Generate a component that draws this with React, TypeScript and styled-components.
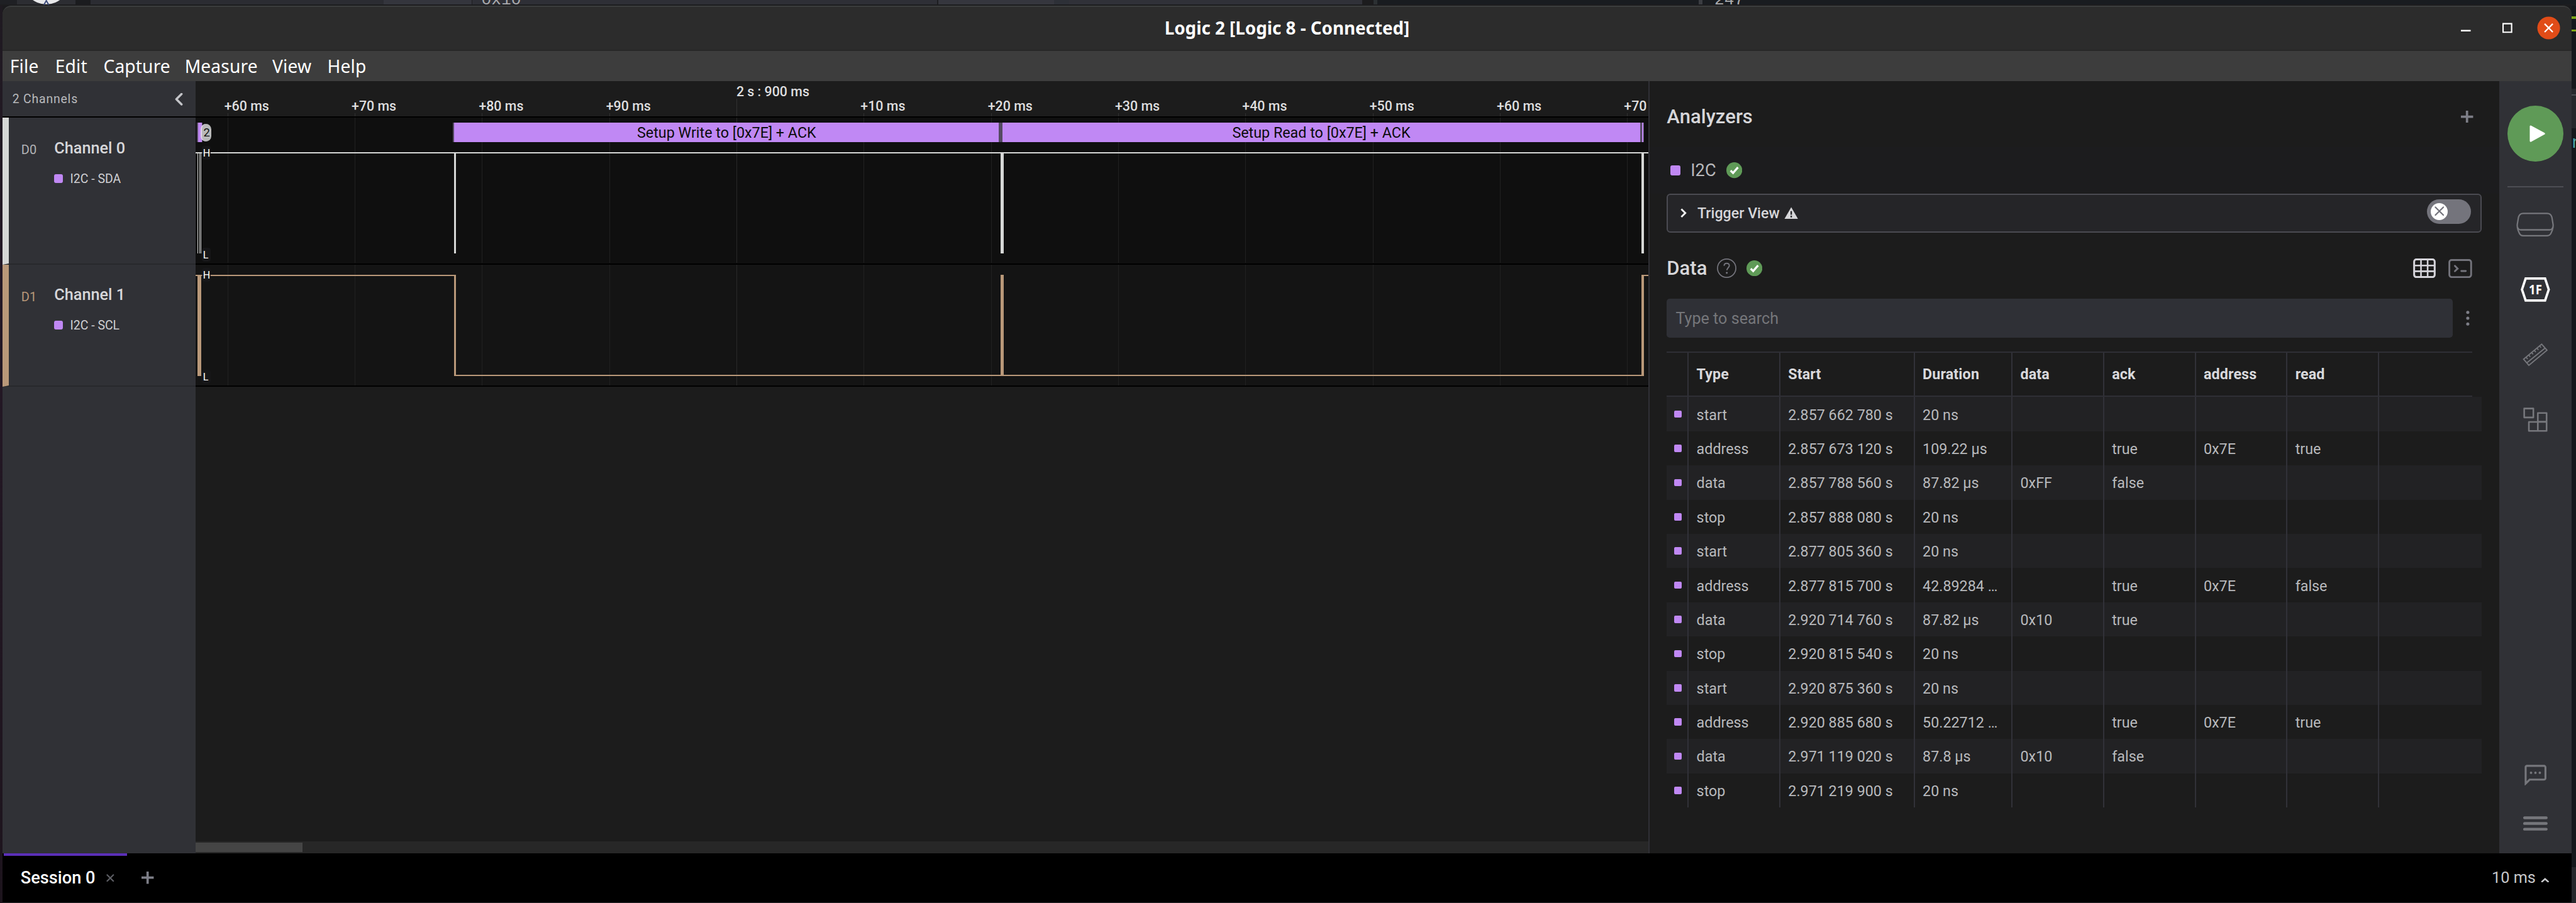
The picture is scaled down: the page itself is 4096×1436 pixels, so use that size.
import React from "react";
import styled, { createGlobalStyle, css } from "styled-components";

/* Design units to device pixels. */
const SCALE = 4096 / 4216;
const p = (n: number) => `${+(n * SCALE).toFixed(3)}px`;

const roboto = `"Roboto", "Liberation Sans", sans-serif`;
const system = `"Noto Sans", "Open Sans", sans-serif`;

const c = {
  panel: "#303136",
  canvas: "#1c1c1c",
  text: "#d6d6d9",
  dim: "#b8b9bc",
  icon: "#76777c",
  line: "#313138",
  purple: "#c088f4",
  green: "#5f9a57",
  brown: "#b99879",
  white: "#d6d7d6",
};

const Global = createGlobalStyle`
  html, body { margin: 0; padding: 0; background: #16181c; }
  body { width: 4096px; height: 1436px; overflow: hidden; }
  * { box-sizing: border-box; }
  svg { display: block; flex: none; }
`;

const Desktop = styled.div`
  width: 4096px;
  height: 1436px;
  display: flex;
  flex-direction: column;
  overflow: hidden;
  font-family: ${roboto};
  color: ${c.text};
  background: #1b1b1d;
`;

/* ---------- what shows of the windows behind ---------- */
const Backdrop = styled.div`
  height: ${p(9)};
  display: flex;
  overflow: hidden;
  flex: none;
`;
const BackdropPart = styled.div<{ w?: number; bg: string }>`
  ${({ w }) => (w ? css`width: ${p(w)}; flex: none;` : css`flex: 1;`)}
  height: 100%;
  background: linear-gradient(${({ bg }) => bg} 7px, #1d1d1f 7px);
  overflow: hidden;
  display: flex;
  align-items: flex-end;
`;
const BackdropText = styled.span<{ pad: number }>`
  font: 400 ${p(27)} / ${p(20)} "Liberation Mono", monospace;
  color: #a9aaad;
  margin-left: ${({ pad }) => p(pad)};
  margin-bottom: ${p(-1.5)};
  white-space: nowrap;
`;
const Middle = styled.div`
  flex: 1;
  display: flex;
  min-height: 0;
`;
const LeftEdge = styled.div`
  width: ${p(4)};
  flex: none;
  background: linear-gradient(#1f1a21, #241826 30%, #1d141d);
`;
const RightEdge = styled.div`
  flex: 1;
  display: flex;
  flex-direction: column;
  overflow: hidden;
  background: #15181c;
`;
const EdgePart = styled.div<{ h: number; bg: string }>`
  height: ${({ h }) => p(h)};
  flex: none;
  background: ${({ bg }) => bg};
`;
const EdgeText = styled.div`
  height: ${p(50)};
  flex: none;
  font: 400 ${p(28)} / ${p(50)} "Liberation Mono", monospace;
  color: #4fa6a6;
`;

/* ---------- window ---------- */
const Window = styled.div`
  width: ${p(4205)};
  flex: none;
  display: flex;
  flex-direction: column;
  border-radius: ${p(14)} ${p(14)} 0 0;
  overflow: hidden;
  background: #2c2c2c;
`;
const TitleBar = styled.div`
  height: ${p(74)};
  flex: none;
  display: grid;
  grid-template-columns: 1fr auto 1fr;
  align-items: center;
  background: #2c2c2c;
  border-radius: ${p(14)} ${p(14)} 0 0;
  border-top: 2px solid #3b3d3d;
  border-bottom: 2px solid #272727;
`;
const Title = styled.div`
  grid-column: 2;
  font: 700 ${p(28.6)} / ${p(40)} ${system};
  color: #fff;
  white-space: nowrap;
`;
const WindowButtons = styled.div`
  grid-column: 3;
  justify-self: end;
  display: flex;
  align-items: center;
  padding-right: ${p(18.5)};
`;
const MenuBar = styled.div`
  height: ${p(50)};
  flex: none;
  display: flex;
  align-items: center;
  padding: 2px 0 0 ${p(12.3)};
  background: #3d3d3d;
`;
const MenuItem = styled.div<{ w: number }>`
  width: ${({ w }) => p(w)};
  font: 400 ${p(29)} / ${p(40)} ${system};
  letter-spacing: ${p(0.15)};
  color: #fff;
  white-space: nowrap;
`;
const Main = styled.div`
  height: ${p(1264)};
  flex: none;
  display: flex;
`;

/* ---------- channels ---------- */
const Channels = styled.div`
  width: ${p(316)};
  flex: none;
  display: flex;
  flex-direction: column;
  background: ${c.panel};
`;
const ChannelsHeader = styled.div`
  height: ${p(60)};
  flex: none;
  display: flex;
  align-items: center;
  justify-content: space-between;
  padding: 1px ${p(20.5)} 0 ${p(16.3)};
  border-bottom: 2px solid #000;
  font-size: ${p(20)};
  letter-spacing: ${p(0.84)};
  color: ${c.dim};
`;
const Channel = styled.div<{ h: number; color: string }>`
  height: ${({ h }) => p(h)};
  flex: none;
  display: flex;
  border-left: 10px solid ${({ color }) => color};
  border-bottom: 2px solid #28292c;
  padding: ${p(30)} 0 0 ${p(20.5)};
`;
const ChannelId = styled.div<{ color: string }>`
  width: ${p(54.1)};
  font: 400 ${p(20.6)} / ${p(30)} ${roboto};
  color: ${({ color }) => color};
  padding-top: ${p(8)};
`;
const ChannelInfo = styled.div`
  display: flex;
  flex-direction: column;
`;
const ChannelName = styled.div`
  font: 500 ${p(26)} / ${p(40)} ${roboto};
`;
const ChannelTag = styled.div`
  display: flex;
  align-items: center;
  gap: ${p(12)};
  margin-top: ${p(13.5)};
  font: 400 ${p(20)} / ${p(32)} ${roboto};
  color: #cfcfd2;
`;
const Swatch = styled.span<{ w: number; h?: number; r?: number }>`
  display: block;
  flex: none;
  width: ${({ w }) => p(w)};
  height: ${({ w, h }) => p(h ?? w)};
  border-radius: ${({ r = 3 }) => p(r)};
  background: ${c.purple};
`;

/* ---------- canvas ---------- */
const Canvas = styled.div`
  width: ${p(2378)};
  flex: none;
  display: flex;
  flex-direction: column;
  overflow: hidden;
  background: ${c.canvas};
`;
const Ruler = styled.div`
  height: ${p(60)};
  flex: none;
  display: flex;
  padding-left: ${p(47.2)};
  overflow: hidden;
  border-bottom: 2px solid #000;
`;
const RulerMark = styled.div<{ major?: boolean }>`
  width: ${p(208.27)};
  flex: none;
  display: flex;
  flex-direction: column;
  padding-top: ${({ major }) => p(major ? 5 : 28.8)};
  font: 500 ${p(22)} / ${p(24)} ${roboto};
  color: #dededf;
  white-space: nowrap;
`;
const RulerLabel = styled.div<{ major?: boolean }>`
  padding-left: ${({ major }) => p(major ? 5 : 0)};
`;
const RulerTick = styled.div`
  flex: 1;
  width: 1px;
  margin: 0 0 0 ${p(5)};
  background: #313131;
`;
const Lane = styled.div<{ h: number; bg: string }>`
  position: relative;
  height: ${({ h }) => p(h)};
  flex: none;
  background: ${({ bg }) => bg};
  border-bottom: 2px solid #000;
`;
const Level = styled.div<{ top: number }>`
  position: absolute;
  left: ${p(10)};
  top: ${({ top }) => p(top)};
  width: ${p(15)};
  height: ${p(23)};
  padding-left: ${p(2.3)};
  border-radius: ${p(4)};
  background: rgba(24, 24, 26, 0.85);
  font: 400 ${p(16.5)} / ${p(24)} ${roboto};
  color: #fff;
`;
const Frames = styled.div`
  position: absolute;
  left: 0;
  top: ${p(8)};
  width: 100%;
  height: ${p(32)};
  display: flex;
`;
const Frame = styled.div<{ gap: number; w: number }>`
  margin-left: ${({ gap }) => p(gap)};
  width: ${({ w }) => p(w)};
  flex: none;
  display: flex;
  align-items: center;
  justify-content: center;
  background: ${c.purple};
  border-left: 2px solid #544a62;
  border-right: 1px solid #544a62;
  padding-top: 2px;
  font: 400 ${p(24)} / ${p(30)} ${roboto};
  color: #0c0c0c;
  white-space: nowrap;
`;
const FrameCount = styled.div`
  position: absolute;
  left: ${p(8.5)};
  top: ${p(2)};
  width: ${p(17.5)};
  height: ${p(29)};
  border-radius: ${p(9)};
  background: #b9b9b9;
  border-left: 2px solid #e2d3ee;
  font: 400 ${p(19)} / ${p(29)} ${roboto};
  text-align: center;
  color: #111;
`;
const CanvasRest = styled.div`
  flex: 1;
`;
const ScrollTrack = styled.div`
  height: ${p(20)};
  flex: none;
  background: #272727;
  padding: 2px 0;
`;
const ScrollThumb = styled.div`
  width: ${p(175)};
  height: 100%;
  background: #454545;
`;
const Divider = styled.div`
  width: ${p(2)};
  flex: none;
  background: #303036;
`;

/* ---------- analyzers ---------- */
const Analyzers = styled.div`
  width: ${p(1390)};
  flex: none;
  display: flex;
  flex-direction: column;
  background: ${c.canvas};
`;
const PanelHeader = styled.div`
  height: ${p(108)};
  flex: none;
  display: flex;
  align-items: center;
  padding: ${p(8)} ${p(42)} 0 ${p(28)};
`;
const Heading = styled.div`
  padding-top: 2px;
  font: 500 ${p(32)} / ${p(40)} ${roboto};
`;
const Spacer = styled.div`
  flex: 1;
`;
const Gap = styled.div<{ w: number }>`
  width: ${({ w }) => p(w)};
  flex: none;
`;
const AnalyzerRow = styled.div`
  height: ${p(76)};
  flex: none;
  display: flex;
  align-items: center;
  padding-left: ${p(34)};
  gap: ${p(17)};
  background: #1c1c1e;
`;
const AnalyzerName = styled.div`
  padding-top: 1px;
  font: 400 ${p(28)} / ${p(40)} ${roboto};
  color: ${c.dim};
`;
const TriggerBox = styled.div`
  margin: 0 ${p(28)};
  height: ${p(64)};
  flex: none;
  display: flex;
  align-items: center;
  border: 2px solid #4b4b52;
  border-radius: ${p(6)};
  background: #252528;
  padding: 0 ${p(16)} 0 ${p(18)};
`;
const TriggerLabel = styled.div`
  margin: 0 ${p(7)} 0 ${p(16)};
  padding-top: 2px;
  font: 500 ${p(23.9)} / ${p(30)} ${roboto};
`;
const Toggle = styled.div`
  width: ${p(72)};
  height: ${p(40)};
  margin-bottom: ${p(6)};
  padding-left: ${p(6)};
  border-radius: ${p(20)};
  background: #74747c;
  display: flex;
  align-items: center;
`;
const Knob = styled.div`
  width: ${p(28)};
  height: ${p(28)};
  border-radius: 50%;
  background: #fff;
  display: flex;
  align-items: center;
  justify-content: center;
`;
const SearchRow = styled.div`
  flex: none;
  height: ${p(64)};
  margin-bottom: ${p(22)};
  padding-left: ${p(28)};
  display: flex;
  align-items: center;
  gap: ${p(22)};
`;
const SearchBox = styled.div`
  width: ${p(1286)};
  height: 100%;
  padding: 1px 0 0 ${p(14.5)};
  border-radius: ${p(5)};
  background: #2f3036;
  font: 400 ${p(25.9)} / ${p(63)} ${roboto};
  color: #75767a;
`;

/* ---------- data table ---------- */
const Table = styled.div`
  margin-left: ${p(28)};
  width: ${p(1334)};
  flex: none;
  display: flex;
  flex-direction: column;
`;
const columns = css`
  display: grid;
  grid-template-columns: ${[36, 150, 220, 160, 150, 150, 150, 150].map(p).join(" ")} 1fr;
`;
const HeadRow = styled.div`
  ${columns}
  width: ${p(1318)};
  height: ${p(75)};
  border-top: 2px solid #2f2f35;
  border-bottom: 2px solid #2f2f35;
`;
const BodyRow = styled.div<{ odd: boolean }>`
  ${columns}
  height: ${p(56)};
  background: ${({ odd }) => (odd ? "#222224" : c.canvas)};
`;
const Cell = styled.div<{ head?: boolean }>`
  display: flex;
  align-items: center;
  padding: ${({ head }) => (head ? "2px" : "3px")} 0 0 ${p(12.7)};
  border-right: 2px solid ${c.line};
  font: ${({ head }) => (head ? 700 : 400)} ${p(24)} / ${p(30)} ${roboto};
  letter-spacing: ${({ head }) => p(head ? 0.12 : 0)};
  color: ${({ head }) => (head ? "#d8d8db" : c.dim)};
  white-space: nowrap;
  &:first-child {
    padding: 0 0 0 ${p(12)};
  }
  &:last-child {
    border-right: 0;
  }
`;

/* ---------- tool rail ---------- */
const Rail = styled.div`
  flex: 1;
  display: flex;
  flex-direction: column;
  align-items: center;
  background: ${c.panel};
  padding-top: ${p(40)};
`;
const PlayButton = styled.div`
  width: ${p(92)};
  height: ${p(92)};
  border-radius: 50%;
  background: ${c.green};
  display: flex;
  align-items: center;
  justify-content: center;
  padding-left: ${p(7)};
`;
const RailLine = styled.div`
  width: ${p(92)};
  height: 2px;
  margin-top: ${p(40)};
  background: #4d4e54;
`;
const RailSlot = styled.div<{ h: number }>`
  height: ${({ h }) => p(h)};
  flex: none;
  display: flex;
  align-items: center;
  justify-content: center;
`;

/* ---------- footer ---------- */
const Footer = styled.div`
  height: ${p(80)};
  flex: none;
  display: flex;
  align-items: stretch;
  background: #000;
  padding-left: ${p(2)};
`;
const Tab = styled.div`
  width: ${p(202)};
  border-top: 4px solid #5b2fb8;
  display: flex;
  align-items: center;
  padding: 0 0 ${p(4)} ${p(27.8)};
  gap: ${p(18)};
  font: 500 ${p(28)} / ${p(40)} ${roboto};
  color: #fff;
  white-space: nowrap;
`;
const NewTab = styled.div`
  display: flex;
  align-items: center;
  padding-left: ${p(24)};
`;
const Zoom = styled.div`
  display: flex;
  align-items: center;
  gap: ${p(8)};
  padding: 0 ${p(37)} 0 0;
  font: 400 ${p(26)} / ${p(40)} ${roboto};
  color: #c6c7ca;
`;
const CaretSlot = styled.div`
  padding-top: ${p(7)};
`;
const WindowBottom = styled.div`
  flex: 1;
  background: #29292b;
`;

type IconProps = { w: number; h: number; box?: string; children: React.ReactNode };
const Icon = ({ w, h, box, children }: IconProps) => (
  <svg width={w * SCALE} height={h * SCALE} viewBox={box ?? `0 0 ${w} ${h}`} fill="none">
    {children}
  </svg>
);

const Plus = () => (
  <Icon w={20} h={20}>
    <path d="M10 0v20M0 10h20" stroke="#7d7e87" strokeWidth="3.8" />
  </Icon>
);
const Check = () => (
  <Icon w={26} h={26}>
    <circle cx="13" cy="13" r="13" fill={c.green} />
    <path d="M7 13.6l4 4 8-9.2" stroke="#fff" strokeWidth="3.4" />
  </Icon>
);

const GRID = Array.from({ length: 12 }, (_, i) => 52.6 + i * 208.27);

const WaveSvg = styled.svg`
  position: absolute;
  left: 0;
  top: 0;
`;
const Wave = ({ h, children }: { h: number; children: React.ReactNode }) => (
  <WaveSvg
    width={2378 * SCALE}
    height={h * SCALE}
    viewBox={`0 0 2378 ${h}`}
    preserveAspectRatio="none"
    shapeRendering="crispEdges"
  >
    {GRID.map((x, i) => (
      <rect key={i} x={x - 0.5} y={0} width={1.03} height={h} fill={i === 4 ? "#292929" : "#212121"} />
    ))}
    {children}
  </WaveSvg>
);

const MARKS = ["+60 ms", "+70 ms", "+80 ms", "+90 ms", "2 s : 900 ms", "+10 ms", "+20 ms", "+30 ms", "+40 ms", "+50 ms", "+60 ms", "+70 ms"];

const ROWS: string[][] = [
  ["start", "2.857 662 780 s", "20 ns", "", "", "", ""],
  ["address", "2.857 673 120 s", "109.22 μs", "", "true", "0x7E", "true"],
  ["data", "2.857 788 560 s", "87.82 μs", "0xFF", "false", "", ""],
  ["stop", "2.857 888 080 s", "20 ns", "", "", "", ""],
  ["start", "2.877 805 360 s", "20 ns", "", "", "", ""],
  ["address", "2.877 815 700 s", "42.89284 …", "", "true", "0x7E", "false"],
  ["data", "2.920 714 760 s", "87.82 μs", "0x10", "true", "", ""],
  ["stop", "2.920 815 540 s", "20 ns", "", "", "", ""],
  ["start", "2.920 875 360 s", "20 ns", "", "", "", ""],
  ["address", "2.920 885 680 s", "50.22712 …", "", "true", "0x7E", "true"],
  ["data", "2.971 119 020 s", "87.8 μs", "0x10", "false", "", ""],
  ["stop", "2.971 219 900 s", "20 ns", "", "", "", ""],
];

type ChannelProps = { h: number; color: string; idColor: string; id: string; name: string; tag: string };
const ChannelBlock = ({ h, color, idColor, id, name, tag }: ChannelProps) => (
  <Channel h={h} color={color}>
    <ChannelId color={idColor}>{id}</ChannelId>
    <ChannelInfo>
      <ChannelName>{name}</ChannelName>
      <ChannelTag>
        <Swatch w={14} />
        {tag}
      </ChannelTag>
    </ChannelInfo>
  </Channel>
);

export default function App() {
  return (
    <Desktop>
      <Global />
      <Backdrop>
        <BackdropPart w={28} bg="#1f2024" />
        <BackdropPart w={96} bg="#2c2d32">
          <Icon w={96} h={9}>
            <circle cx="48" cy="-32" r="39" fill="#e8e8ea" />
            <path d="M44 8l4-7 4 7" stroke="#3b4a7a" strokeWidth="2" />
          </Icon>
        </BackdropPart>
        <BackdropPart w={24} bg="#1b1c1f" />
        <BackdropPart w={480} bg="#2b2c32" />
        <BackdropPart w={144} bg="#34353d" />
        <BackdropPart w={1} bg="#1d1d20" />
        <BackdropPart w={761} bg="#2e2f36">
          <BackdropText pad={15}>0x10</BackdropText>
        </BackdropPart>
        <BackdropPart w={2} bg="#1d1d20" />
        <BackdropPart w={189} bg="#35363e" />
        <BackdropPart w={25} bg="#2d3037" />
        <BackdropPart w={480} bg="#303138" />
        <BackdropPart w={18} bg="#1c1c1e" />
        <BackdropPart w={6} bg="#2c3033" />
        <BackdropPart w={526} bg="#191c20" />
        <BackdropPart w={6} bg="#3b3d42" />
        <BackdropPart bg="#191c20">
          <BackdropText pad={20}>247</BackdropText>
        </BackdropPart>
      </Backdrop>
      <Middle>
        <LeftEdge />
        <Window>
          <TitleBar>
            <Title>Logic 2 [Logic 8 - Connected]</Title>
            <WindowButtons>
              <Icon w={162.5} h={38}>
                <path d="M0 23.500h16" stroke="#fff" strokeWidth="2.600" />
                <path d="M69 12h14v14h-14z" stroke="#fff" strokeWidth="2.200" />
                <circle cx="143.700" cy="19" r="18.600" fill="#e14c18" />
                <path d="M137 12.300l13.400 13.400M150.400 12.300l-13.400 13.400" stroke="#fff" strokeWidth="2.400" />
              </Icon>
            </WindowButtons>
          </TitleBar>
          <MenuBar>
            <MenuItem w={74}>File</MenuItem>
            <MenuItem w={79}>Edit</MenuItem>
            <MenuItem w={133}>Capture</MenuItem>
            <MenuItem w={143.5}>Measure</MenuItem>
            <MenuItem w={90}>View</MenuItem>
            <MenuItem w={80}>Help</MenuItem>
          </MenuBar>
          <Main>
            <Channels>
              <ChannelsHeader>
                2 Channels
                <Icon w={14} h={20}>
                  <path d="M12 1.500L3.500 10l8.500 8.500" stroke="#c3c4c8" strokeWidth="3.600" strokeLinecap="round" strokeLinejoin="round" />
                </Icon>
              </ChannelsHeader>
              <ChannelBlock h={240} color={c.white} idColor="#b3b4b6" id="D0" name="Channel 0" tag="I2C - SDA" />
              <ChannelBlock h={200} color={c.brown} idColor={c.brown} id="D1" name="Channel 1" tag="I2C - SCL" />
            </Channels>
            <Canvas>
              <Ruler>
                {MARKS.map((m, i) => (
                  <RulerMark key={i} major={i === 4}>
                    <RulerLabel major={i === 4}>{m}</RulerLabel>
                    <RulerTick />
                  </RulerMark>
                ))}
              </Ruler>
              <Lane h={240} bg="#0f0f0f">
                <Wave h={238}>
                  <g fill={c.white}>
                    <rect x={0} y={56.4} width={2378} height={2.06} />
                    <rect x={3.6} y={58} width={1.03} height={164} />
                    <rect x={5.7} y={58} width={1.03} height={164} />
                    <rect x={7.8} y={58} width={1.03} height={164} />
                    <rect x={423} y={58} width={3} height={164} />
                    <rect x={1317} y={58} width={6} height={164} />
                    <rect x={2366} y={58} width={4} height={164} />
                  </g>
                </Wave>
                <Frames>
                  <Frame gap={2} w={9} />
                  <Frame gap={410.5} w={894.5}>Setup Write to [0x7E] + ACK</Frame>
                  <Frame gap={0} w={3} />
                  <Frame gap={0} w={1046}>Setup Read to [0x7E] + ACK</Frame>
                  <Frame gap={0} w={6} />
                  <FrameCount>2</FrameCount>
                </Frames>
                <Level top={45.4}>H</Level>
                <Level top={212.4}>L</Level>
              </Lane>
              <Lane h={200} bg="#141414">
                <Wave h={198}>
                  <g fill={c.brown}>
                    <rect x={0} y={16} width={426} height={2.06} />
                    <rect x={3} y={16} width={6} height={166} />
                    <rect x={423} y={16} width={3} height={166} />
                    <rect x={423} y={180} width={1947} height={2.06} />
                    <rect x={1317} y={16} width={6} height={166} />
                    <rect x={2366} y={16} width={4} height={166} />
                    <rect x={2366} y={16} width={12} height={2.06} />
                  </g>
                </Wave>
                <Level top={5.4}>H</Level>
                <Level top={171.8}>L</Level>
              </Lane>
              <CanvasRest />
              <ScrollTrack>
                <ScrollThumb />
              </ScrollTrack>
            </Canvas>
            <Divider />
            <Analyzers>
              <PanelHeader>
                <Heading>Analyzers</Heading>
                <Spacer />
                <Plus />
              </PanelHeader>
              <AnalyzerRow>
                <Swatch w={16} />
                <AnalyzerName>I2C</AnalyzerName>
                <Check />
              </AnalyzerRow>
              <TriggerBox>
                <Icon w={14} h={18}>
                  <path d="M3.500 2.500l6.500 6.500-6.500 6.500" stroke="#f2f2f2" strokeWidth="3" />
                </Icon>
                <TriggerLabel>Trigger View</TriggerLabel>
                <Icon w={23} h={20}>
                  <path d="M11.500 .5L22.500 19.500H.5z" fill={c.text} />
                  <path d="M11.500 7v6M11.500 14.500v2.800" stroke="#252528" strokeWidth="2.400" />
                </Icon>
                <Spacer />
                <Toggle>
                  <Knob>
                    <Icon w={16} h={16}>
                      <path d="M1.500 1.500l13 13M14.500 1.500l-13 13" stroke="#74747c" strokeWidth="2.300" strokeLinecap="round" />
                    </Icon>
                  </Knob>
                </Toggle>
              </TriggerBox>
              <PanelHeader>
                <Heading>Data</Heading>
                <Gap w={16} />
                <Icon w={32} h={32}>
                  <circle cx="16" cy="16" r="15" stroke="#74747c" strokeWidth="1.800" />
                  <path d="M11.800 12.200c0-2.600 1.800-4.200 4.300-4.200s4.200 1.600 4.200 3.900c0 3-4 3.600-4 7.400" stroke="#74747c" strokeWidth="2" />
                  <circle cx="16.200" cy="23.500" r="1.600" fill="#74747c" />
                </Icon>
                <Gap w={16} />
                <Check />
                <Spacer />
                <Icon w={37} h={32} box="57 338 111 97">
                  <rect x="61.500" y="343" width="102" height="87.500" rx="11" stroke="#d5d4da" strokeWidth="9.500" />
                  <path d="M95.500 343v88M128.500 343v88M61 373h103M61 401.500h103" stroke="#d5d4da" strokeWidth="8" />
                </Icon>
                <Gap w={21} />
                <Icon w={39} h={32} box="231 338 117 97">
                  <rect x="235.500" y="346" width="108" height="84.500" rx="11" stroke="#74747c" strokeWidth="9" />
                  <path d="M263 375l13.500 13.500L263 401M295 400.500h22" stroke="#74747c" strokeWidth="9" strokeLinecap="round" />
                </Icon>
                <Gap w={2} />
              </PanelHeader>
              <SearchRow>
                <SearchBox>Type to search</SearchBox>
                <Icon w={6} h={26}>
                  <g fill="#7d7e87">
                    <circle cx="3" cy="3.800" r="2.600" />
                    <circle cx="3" cy="13.400" r="2.600" />
                    <circle cx="3" cy="23" r="2.600" />
                  </g>
                </Icon>
              </SearchRow>
              <Table>
                <HeadRow>
                  {["", "Type", "Start", "Duration", "data", "ack", "address", "read", ""].map((h, i) => (
                    <Cell key={i} head>
                      {h}
                    </Cell>
                  ))}
                </HeadRow>
                {ROWS.map((r, i) => (
                  <BodyRow key={i} odd={i % 2 === 0}>
                    <Cell>
                      <Swatch w={12} r={2} />
                    </Cell>
                    {r.map((v, j) => (
                      <Cell key={j}>{v}</Cell>
                    ))}
                    <Cell />
                  </BodyRow>
                ))}
              </Table>
            </Analyzers>
            <Rail>
              <PlayButton>
                <Icon w={26} h={28}>
                  <path d="M2 2v24L24 14z" fill="#fff" stroke="#fff" strokeWidth="3" strokeLinejoin="round" />
                </Icon>
              </PlayButton>
              <RailLine />
              <RailSlot h={120}>
                <Icon w={64} h={41} box="564 108 192 123">
                  <path
                    d="M601 115h118c12 0 20 8 23 19l6 36c1 10-1 18-4 28l-6 14c-4 9-10 13-20 13H602c-10 0-16-4-20-13l-6-14c-3-10-5-18-4-28l6-36c3-11 11-19 23-19z"
                    stroke={c.icon}
                    strokeWidth="7"
                  />
                  <path d="M573 182c2 9 7 14 17 14h140c10 0 15-5 17-14" stroke={c.icon} strokeWidth="7" />
                </Icon>
              </RailSlot>
              <RailSlot h={94}>
                <Icon w={48} h={40} box="588 432 144 120">
                  <path d="M612.500 438h95.500l18 54-18 54h-95.500l-18-54z" stroke="#fff" strokeWidth="11.500" />
                  <text x="660.500" y="515.500" textAnchor="middle" fontFamily="Noto Sans, Open Sans, sans-serif" fontWeight="700" fontSize="65" textLength="64" lengthAdjust="spacingAndGlyphs" fill="#fff">
                    1F
                  </text>
                </Icon>
              </RailSlot>
              <RailSlot h={120}>
                <Icon w={42} h={40} box="597 754 126 120">
                  <g stroke={c.icon} strokeWidth="6">
                    <path d="M602 835L691 761l26 30-89 74z" />
                    <path d="M618 853l90-73" />
                    <path d="M613 824l9 10M626 813l9 10M640 801l9 10M653 790l9 10M666 779l9 10M679 768l9 10" strokeWidth="5.500" />
                  </g>
                </Icon>
              </RailSlot>
              <RailSlot h={92}>
                <Icon w={40} h={40} box="599 1073 120 120">
                  <g stroke={c.icon} strokeWidth="8" strokeLinejoin="round">
                    <path d="M604 1078h45v44h-45zM671 1100h43v43h-43zM627 1144h44v44h-44zM671 1144h43v44h-43z" />
                  </g>
                </Icon>
              </RailSlot>
              <Spacer />
              <RailSlot h={80}>
                <Icon w={36} h={34}>
                  <path d="M4 1.900h28a2.400 2.400 0 0 1 2.400 2.400v17.800a2.400 2.400 0 0 1-2.400 2.400H8.500L2 31V4.200A2.300 2.300 0 0 1 4 1.900z" stroke={c.icon} strokeWidth="3.200" />
                  <g fill={c.icon}>
                    <circle cx="10.800" cy="13.300" r="2" />
                    <circle cx="18" cy="13.300" r="2" />
                    <circle cx="25.200" cy="13.300" r="2" />
                  </g>
                </Icon>
              </RailSlot>
              <RailSlot h={78}>
                <Icon w={40} h={24}>
                  <path d="M2.200 2.600h35.600M2.200 11.900h35.600M2.200 21.200h35.600" stroke={c.icon} strokeWidth="4.500" strokeLinecap="round" />
                </Icon>
              </RailSlot>
              <RailSlot h={10} />
            </Rail>
          </Main>
          <Footer>
            <Tab>
              Session 0
              <Icon w={13} h={13}>
                <path d="M.8 .8l11.400 11.400M12.200 .8L.8 12.200" stroke="#5d5e64" strokeWidth="2.200" />
              </Icon>
            </Tab>
            <NewTab>
              <Plus />
            </NewTab>
            <Spacer />
            <Zoom>
              10 ms
              <CaretSlot>
                <Icon w={14} h={8}>
                  <path d="M1.200 7L7 1.800 12.800 7" stroke="#c6c7ca" strokeWidth="2.600" />
                </Icon>
              </CaretSlot>
            </Zoom>
          </Footer>
          <WindowBottom />
        </Window>
        <RightEdge>
          <EdgePart h={18} bg="#15181c" />
          <EdgePart h={4} bg="#7ea518" />
          <EdgePart h={17} bg="#15181c" />
          <EdgePart h={4} bg="#7ea518" />
          <EdgePart h={93} bg="#15181c" />
          <EdgePart h={9} bg="#26282c" />
          <EdgePart h={2} bg="#4a4d52" />
          <EdgePart h={54} bg="#26282c" />
          <EdgeText>n</EdgeText>
          <EdgePart h={1160} bg="#15181c" />
          <EdgePart h={70} bg="#26272b" />
        </RightEdge>
      </Middle>
    </Desktop>
  );
}
